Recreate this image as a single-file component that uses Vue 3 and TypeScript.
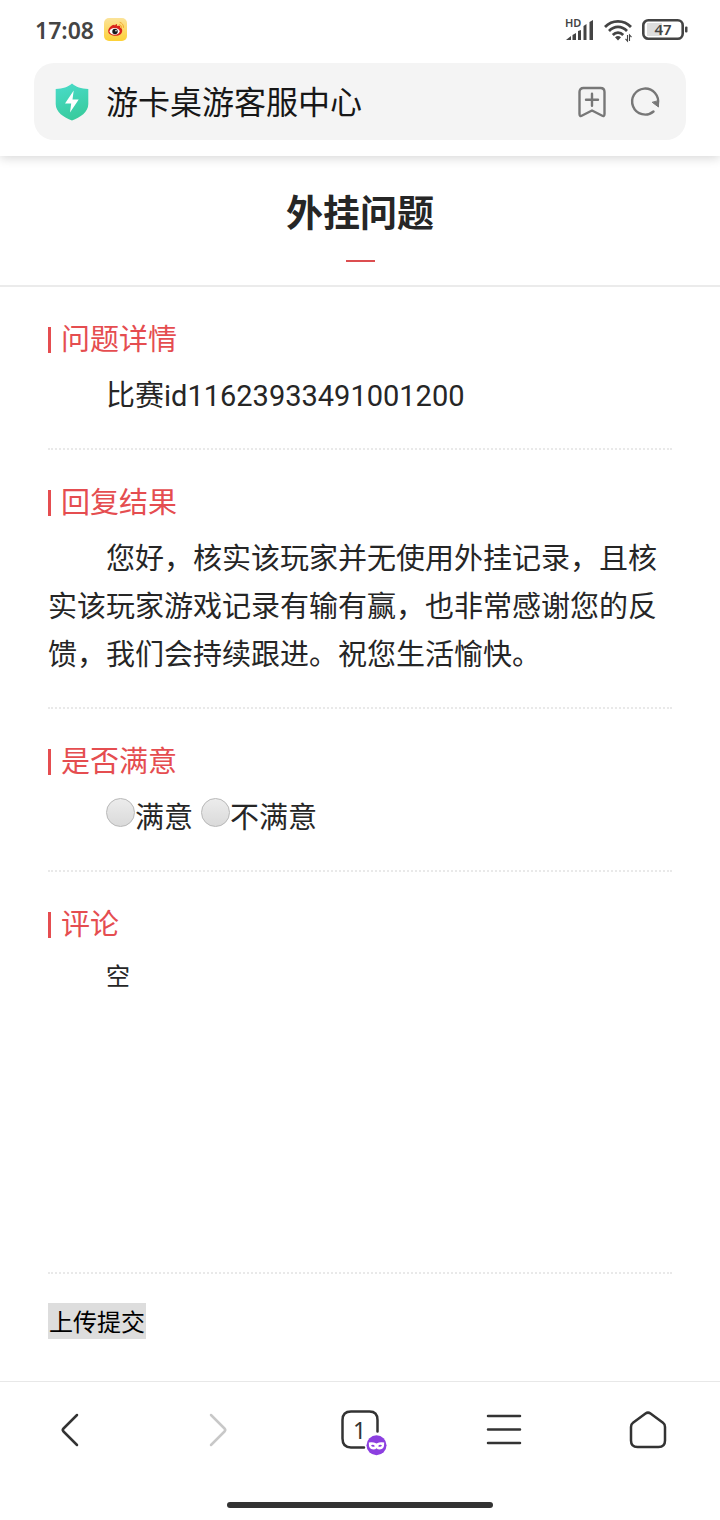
<script setup lang="ts">
import { ref } from 'vue'

const satisfaction = ref<string>('')
const comment = ref<string>('空')
const options: { value: string; label: string }[] = [
  { value: 'yes', label: '满意' },
  { value: 'no', label: '不满意' },
]
</script>

<template>
  <div class="screen">
    <header class="top">
      <div class="status">
        <div class="status-left">
          <time>17:08</time>
          <svg class="weibo" viewBox="0 0 23 23" aria-hidden="true">
            <defs>
              <linearGradient id="weibo-bg" x1="0" y1="0" x2="0" y2="1">
                <stop offset="0" stop-color="#fbe39a" />
                <stop offset="1" stop-color="#fdd136" />
              </linearGradient>
            </defs>
            <rect width="23" height="23" rx="5" fill="url(#weibo-bg)" />
            <path d="M4.200 13c0-2.700 3.800-6.200 5.800-6.200.6 0 .8.300.9.900.6-1 1-1.800 1.700-1.800.8.400.4 1.500.2 2.300 2-.7 3.900-.6 3.400 1.600 1.400.3 2 1.400 2 2.900 0 3-2.800 5-6.500 5s-7.500-1.400-7.500-4.700z" fill="#d9241c" />
            <ellipse cx="10.600" cy="13.300" rx="5" ry="3.400" fill="#fff" />
            <circle cx="11" cy="13.500" r="2.700" fill="#17191d" />
            <circle cx="12" cy="12.700" r=".8" fill="#fff" />
            <path d="M15.500 6.600a2.500 2.500 0 0 1 2 3M16 4.400a5 5 0 0 1 3.500 5" fill="none" stroke="#f3a62c" stroke-width="1" stroke-linecap="round" />
          </svg>
        </div>
        <div class="status-right">
          <svg class="signal" viewBox="0 0 29 24" aria-hidden="true">
            <text x="0" y="9" font-size="11" font-weight="600">HD</text>
            <path d="M1 22l5-4v4zM7.500 17l3.500-2v7H7.500zM13 13l3-1v10h-3zM18.500 8l3-2v16h-3zM24.500 4l3.500-2v20h-3.500z" />
          </svg>
          <svg class="wifi" viewBox="0 0 28 24" aria-hidden="true">
            <g fill="none" stroke="#444" stroke-width="2.700">
              <path d="M1 9C8 1.500 20 1.500 27 9" />
              <path d="M5 13C10.300 7.500 17.700 7.500 23 13" />
              <path d="M8.800 17c3-3.200 7.400-3.200 10.400 0" />
            </g>
            <path d="M11 19.200q3-2.500 6 0l-3 3.300z" fill="#444" />
            <path d="M23.500 17v6l-2-2.200M25.500 23v-6l2 2.200" fill="none" stroke="#444" stroke-width="1.100" />
          </svg>
          <svg class="battery" viewBox="0 0 46 21" aria-hidden="true">
            <rect x="5" y="4" width="15" height="13" fill="#ddd" />
            <rect x="1.300" y="1.300" width="39.400" height="18.400" rx="5" fill="none" stroke="#444" stroke-width="2.600" />
            <rect x="43" y="7.500" width="2.500" height="6" rx="1" fill="#444" />
            <text x="21" y="16" font-size="15" font-weight="600" text-anchor="middle">47</text>
          </svg>
        </div>
      </div>
      <div class="address">
        <svg class="shield" viewBox="0 0 34 38" aria-hidden="true">
          <defs>
            <linearGradient id="shield-bg" x1="0" y1="0" x2="0.300" y2="1">
              <stop offset="0" stop-color="#4adccb" />
              <stop offset="1" stop-color="#39cc9f" />
            </linearGradient>
          </defs>
          <path d="M17 .5C21 4 26 5.500 33.300 6v15c0 8-8 13.500-16.300 16.500C8.700 34.500.7 29 .7 21V6C8 5.500 13 4 17 .5z" fill="url(#shield-bg)" />
          <path d="M18.700 7.500L10 20.500h6.200L15 29.500l8.700-13h-6.200z" fill="#fff" />
        </svg>
        <span class="site">游卡桌游客服中心</span>
        <button class="tool" type="button" aria-label="添加书签">
          <svg viewBox="0 0 28 32" aria-hidden="true">
            <path d="M5.500 2h17q4 0 4 4v22q0 3-2.700 1.500L14 24.500 4.200 29.500Q1.500 31 1.500 28V6q0-4 4-4zM14 7.800v12M8 13.800h12" />
          </svg>
        </button>
        <button class="tool" type="button" aria-label="刷新">
          <svg viewBox="0 0 28 32" aria-hidden="true">
            <path d="M22.500 25.500A13 13 0 1 1 26.800 18.500" />
            <path class="solid" d="M27.500 15v6L21.500 16.500z" />
          </svg>
        </button>
      </div>
    </header>

    <main>
      <div class="title"><h1>外挂问题</h1></div>
      <form class="content" @submit.prevent>
        <section>
          <h2>问题详情</h2>
          <p>比赛id11623933491001200</p>
        </section>
        <section>
          <h2>回复结果</h2>
          <p>您好，核实该玩家并无使用外挂记录，且核实该玩家游戏记录有输有赢，也非常感谢您的反馈，我们会持续跟进。祝您生活愉快。</p>
        </section>
        <section>
          <h2 id="rating-title">是否满意</h2>
          <div class="choices" role="radiogroup" aria-labelledby="rating-title">
            <label v-for="o in options" :key="o.value">
              <input v-model="satisfaction" type="radio" name="rating" :value="o.value" />
              <span>{{ o.label }}</span>
            </label>
          </div>
        </section>
        <section>
          <h2><label for="comment">评论</label></h2>
          <textarea id="comment" v-model="comment"></textarea>
        </section>
        <button class="submit" type="submit">上传提交</button>
      </form>
    </main>

    <footer>
      <nav>
        <button type="button" aria-label="后退">
          <svg viewBox="0 0 48 48" aria-hidden="true"><path d="M29 9L15.500 22.500q-1.500 1.500 0 3L29 39" /></svg>
        </button>
        <button type="button" aria-label="前进" disabled>
          <svg viewBox="0 0 48 48" aria-hidden="true"><path d="M19 9l13.500 13.500q1.500 1.500 0 3L19 39" /></svg>
        </button>
        <button type="button" aria-label="标签页">
          <svg viewBox="0 0 48 48" aria-hidden="true">
            <path d="M28 41.500H15q-8.500 0-8.500-9V14q0-8.500 8.500-8.500h18.500q8 0 8 8.500v11.500" />
            <text x="23.500" y="32.500" font-size="23" text-anchor="middle">1</text>
            <circle cx="40.500" cy="39.300" r="10" fill="#8c3fe0" />
            <path class="mask" d="M32.800 36.500q4.200-.8 7.700 1 3.500-1.800 7.700-1 .3 7-4.500 7-2.200 0-3.200-1.200-1 1.200-3.200 1.200-4.800 0-4.500-7z" />
            <path class="eyes" d="M35 39.200q2.700-1 3.900 1-2.700 1.600-3.900-1zM46 39.200q-2.700-1-3.900 1 2.700 1.600 3.900-1z" />
          </svg>
        </button>
        <button type="button" aria-label="菜单">
          <svg viewBox="0 0 48 48" aria-hidden="true"><path d="M8 10h32M8 23.500h32M8 37h32" /></svg>
        </button>
        <button type="button" aria-label="主页">
          <svg viewBox="0 0 48 48" aria-hidden="true"><path d="M21.500 7.500q2.500-1.800 5 0l12.500 9.300q2 1.500 2 4.200v13.500q0 6.500-6.500 6.500h-21Q7 41 7 34.500V21q0-2.700 2-4.200z" /></svg>
        </button>
      </nav>
      <div class="home-bar"></div>
    </footer>
  </div>
</template>

<style>
body {
  margin: 0;
  background: #fff;
}
</style>

<style scoped>
.screen {
  min-height: 100vh;
  display: flex;
  flex-direction: column;
  font-family: Roboto, "Noto Sans CJK SC", sans-serif;
  color: #262626;
}
svg {
  display: block;
  overflow: visible;
}
button {
  border: 0;
  padding: 0;
  background: none;
  font: inherit;
  color: inherit;
}
.top {
  padding: 0 34px 16px;
  box-shadow: 0 2px 10px rgba(0, 0, 0, 0.16);
}
.status {
  height: 63px;
  padding: 0 0 4px 1px;
  box-sizing: border-box;
  display: flex;
  justify-content: space-between;
  align-items: center;
  font-family: "Noto Sans", sans-serif;
  font-size: 23px;
  font-weight: 600;
  color: #444;
}
.status text {
  fill: #444;
}
.status-left {
  display: flex;
  align-items: center;
  gap: 10px;
}
.weibo {
  width: 23px;
  height: 23px;
}
.status-right {
  display: flex;
  align-items: center;
  gap: 10px;
  margin-right: -2px;
}
.signal {
  width: 29px;
  height: 24px;
  fill: #444;
}
.wifi {
  width: 28px;
  height: 24px;
}
.battery {
  width: 46px;
  height: 21px;
}
.address {
  height: 77px;
  padding: 0 27px 0 21px;
  display: flex;
  align-items: center;
  border-radius: 20px;
  background: #f4f4f4;
}
.shield {
  width: 34px;
  height: 38px;
  margin-right: 17px;
}
.site {
  flex: 1;
  padding-top: 2px;
  font-size: 32px;
  line-height: 48px;
  color: #171717;
}
.tool {
  margin-left: 25px;
}
.tool svg {
  width: 28px;
  height: 32px;
  fill: none;
  stroke: #777;
  stroke-width: 2.4;
  stroke-linecap: round;
  stroke-linejoin: round;
}
.tool .solid {
  fill: #777;
  stroke-width: 1;
}
main {
  flex: 1;
}
.title {
  padding: 31px 0 23px;
  border-bottom: 2px solid #ebebeb;
  text-align: center;
}
h1 {
  margin: 0;
  font-size: 37px;
  line-height: 56px;
  font-weight: 700;
}
h1::after {
  content: "";
  display: block;
  width: 29px;
  height: 2px;
  margin: 17px auto 0;
  background: #dc4e50;
}
.content {
  padding: 0 48px 42px;
}
section {
  padding: 29px 0 28px;
  border-bottom: 2px dotted #e9e9e9;
}
h2 {
  display: flex;
  align-items: center;
  gap: 10px;
  margin: 0 0 8px;
  font-size: 29px;
  line-height: 48px;
  font-weight: 400;
  color: #e54d50;
}
h2::before {
  content: "";
  width: 3px;
  height: 26px;
  background: #e54d50;
}
p {
  margin: 0;
  font-size: 29px;
  line-height: 48px;
  text-indent: 2em;
}
.choices {
  display: flex;
  flex-wrap: wrap;
  gap: 8px;
  padding-left: 58px;
  font-size: 29px;
  line-height: 48px;
}
.choices label {
  display: flex;
}
input {
  appearance: none;
  width: 29px;
  height: 29px;
  margin: 4px 0 0;
  border: 1px solid #b8b8b8;
  border-radius: 50%;
  background: linear-gradient(#ececec, #dadada);
}
input:checked {
  border: 8px solid #e54d50;
}
textarea {
  display: block;
  width: 100%;
  height: 287px;
  box-sizing: border-box;
  padding: 0 58px;
  border: 0;
  resize: none;
  outline: 0;
  background: none;
  font-family: inherit;
  font-size: 24px;
  line-height: 40px;
  color: inherit;
}
.submit {
  display: block;
  margin-top: 29px;
  padding: 4px 1px 0;
  background: #ddd;
  font-size: 24px;
  line-height: 32px;
  color: #000;
}
footer {
  border-top: 1px solid #e8e8e8;
  padding-bottom: 12px;
}
nav {
  display: grid;
  grid-template-columns: repeat(5, 1fr);
}
nav button {
  height: 96px;
  display: grid;
  place-items: center;
}
nav svg {
  width: 48px;
  height: 48px;
  fill: none;
  stroke: #333;
  stroke-width: 2.5;
  stroke-linecap: round;
  stroke-linejoin: round;
}
nav button:disabled svg {
  stroke: #c8c8c8;
}
nav text {
  fill: #333;
  stroke: none;
  font-family: "Noto Sans", sans-serif;
}
nav circle {
  stroke: none;
}
nav .mask {
  fill: #fff;
  stroke: none;
}
nav .eyes {
  fill: #8c3fe0;
  stroke: none;
}
.home-bar {
  width: 37%;
  height: 6px;
  margin: 24px auto 0;
  border-radius: 3px;
  background: #333;
}
</style>
